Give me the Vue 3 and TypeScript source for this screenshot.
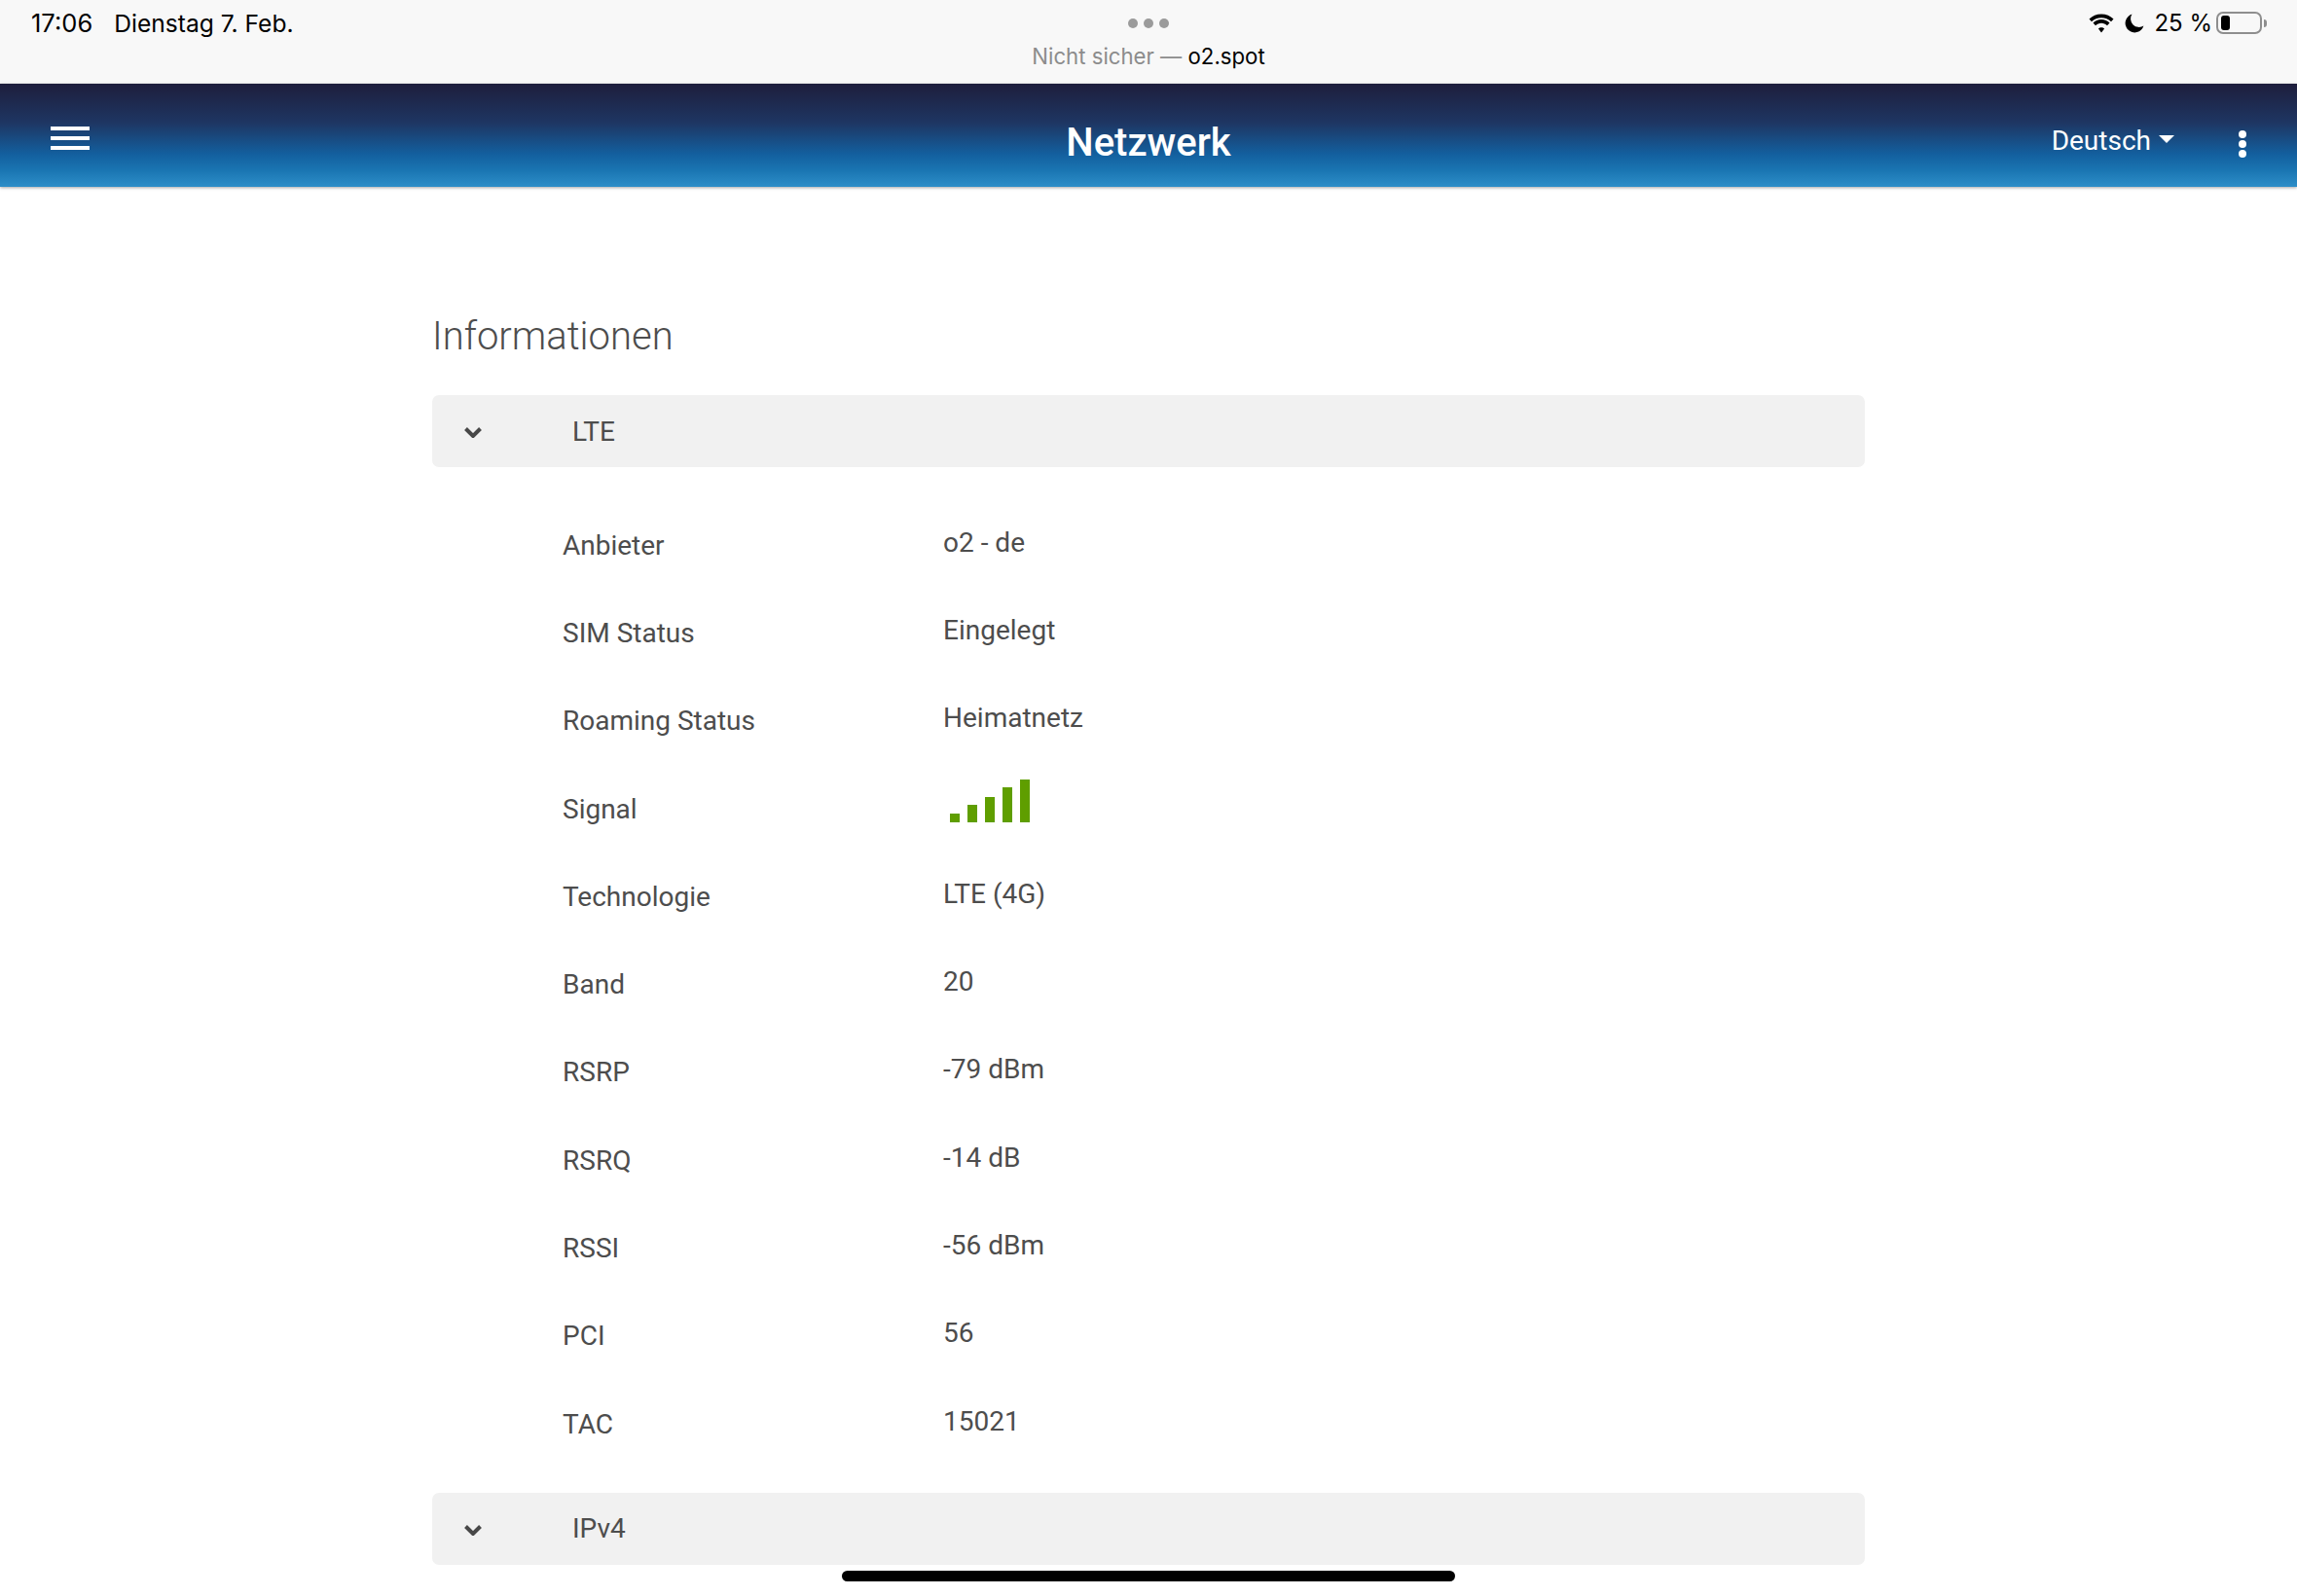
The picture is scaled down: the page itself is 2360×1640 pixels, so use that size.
<script setup lang="ts">
interface Row { label: string; value?: string; signal?: boolean }
const rows: Row[] = [
  { label: 'Anbieter', value: 'o2 - de' },
  { label: 'SIM Status', value: 'Eingelegt' },
  { label: 'Roaming Status', value: 'Heimatnetz' },
  { label: 'Signal', signal: true },
  { label: 'Technologie', value: 'LTE (4G)' },
  { label: 'Band', value: '20' },
  { label: 'RSRP', value: '-79 dBm' },
  { label: 'RSRQ', value: '-14 dB' },
  { label: 'RSSI', value: '-56 dBm' },
  { label: 'PCI', value: '56' },
  { label: 'TAC', value: '15021' },
]
const bars = [9, 18, 26, 36, 44]
</script>

<template>
  <div class="page">
    <div class="status">
      <div class="st-left"><span class="time">17:06</span><span>Dienstag 7. Feb.</span></div>
      <div class="st-mid">
        <div class="dots"><i></i><i></i><i></i></div>
        <div class="url"><span class="grey">Nicht sicher — </span>o2.spot</div>
      </div>
      <div class="st-right">
        <svg class="wifi" width="28" height="20" viewBox="0 0 28 20">
          <path d="M14 4.2c3.9 0 7.4 1.5 10 4l2.5-2.7C23.300 2.300 18.900 .4 14 .4S4.700 2.300 1.500 5.500L4 8.200c2.600-2.500 6.100-4 10-4z" fill="#000"/>
          <path d="M14 9.800c2.300 0 4.400.9 6 2.400l2.500-2.700c-2.200-2.100-5.200-3.400-8.500-3.400s-6.300 1.300-8.500 3.400L8 12.200c1.600-1.500 3.700-2.400 6-2.400z" fill="#000"/>
          <path d="M14 14.200c-1.200 0-2.300.5-3.100 1.200L14 19.600l3.100-4.200c-.8-.7-1.900-1.200-3.100-1.200z" fill="#000"/>
        </svg>
        <svg class="moon" width="20" height="20" viewBox="0 0 20 20">
          <path d="M7.500.6A9.600 9.600 0 1 0 19.400 12.500 8.600 8.600 0 0 1 7.500.6z" fill="#000"/>
        </svg>
        <span class="pct">25 %</span>
        <div class="battery"><div class="level"></div></div>
        <div class="nub"></div>
      </div>
    </div>

    <header class="bar">
      <div class="burger"><i></i><i></i><i></i></div>
      <h1 class="title">Netzwerk</h1>
      <div class="lang">Deutsch<span class="caret"></span></div>
      <div class="kebab"><i></i><i></i><i></i></div>
    </header>

    <main class="content">
      <h2 class="heading">Informationen</h2>
      <div class="panel">
        <svg class="chev" width="18" height="12" viewBox="0 0 18 12">
          <path d="M1.500 2.500l7.500 7.500 7.500-7.500" fill="none" stroke="#484848" stroke-width="4"/>
        </svg>
        <span>LTE</span>
      </div>
      <div class="rows">
        <div v-for="r in rows" :key="r.label" class="row">
          <div class="lbl">{{ r.label }}</div>
          <div v-if="r.signal" class="signal">
            <i v-for="(h, n) in bars" :key="n" :style="{ height: h + 'px' }"></i>
          </div>
          <div v-else class="val">{{ r.value }}</div>
        </div>
      </div>
      <div class="panel">
        <svg class="chev" width="18" height="12" viewBox="0 0 18 12">
          <path d="M1.500 2.500l7.500 7.500 7.500-7.500" fill="none" stroke="#484848" stroke-width="4"/>
        </svg>
        <span>IPv4</span>
      </div>
    </main>

    <div class="home"></div>
  </div>
</template>

<style>
html, body { margin: 0; background: #fff; }
</style>

<style scoped>
.page {
  position: relative;
  width: 2360px;
  height: 1640px;
  overflow: hidden;
  background: #fff;
  font-family: Roboto, "Liberation Sans", sans-serif;
  color: #4d4d4d;
}
.status {
  height: 86px;
  background: #f8f8f8;
  display: grid;
  grid-template-columns: 1fr auto 1fr;
  font-family: Inter, "Liberation Sans", sans-serif;
  color: #000;
  font-size: 24px;
}
.st-left {
  display: flex;
  gap: 22px;
  padding: 9px 0 0 32px;
  line-height: 30px;
  align-items: flex-start;
  font-size: 24.600px;
}
.time { font-size: 25.500px; }
.st-mid {
  display: flex;
  flex-direction: column;
  align-items: center;
  padding-top: 19px;
}
.dots { display: flex; gap: 6px; }
.dots i { width: 10px; height: 10px; border-radius: 50%; background: #9b9b9b; }
.url { margin-top: 14px; line-height: 30px; font-size: 22.200px; }
.grey { color: #8c8c8c; }
.st-right {
  display: flex;
  justify-content: flex-end;
  align-items: flex-start;
  padding: 9px 31px 0 0;
  line-height: 30px;
}
.wifi { margin: 5px 10px 0 0; }
.moon { margin: 5px 10px 0 0; }
.pct { margin-right: 4px; }
.battery {
  width: 47px;
  height: 23px;
  margin-top: 3px;
  box-sizing: border-box;
  border: 2px solid #8e8e8e;
  border-radius: 7px;
  padding: 2px 3px;
}
.level { width: 9px; height: 15px; background: #000; border-radius: 3px; }
.nub {
  width: 3px;
  height: 8px;
  margin: 11px 0 0 2px;
  background: #8e8e8e;
  border-radius: 0 3px 3px 0;
}
.bar {
  height: 106px;
  box-sizing: border-box;
  display: flex;
  align-items: center;
  position: relative;
  background: linear-gradient(to bottom, #1e1e3c 0%, #1e3663 38%, #135f9e 68%, #1a75b2 84%, #2d8ec8 100%);
  box-shadow: 0 1px 3px rgba(0, 0, 0, .35);
  color: #fff;
  padding: 0 52px;
}
.burger { display: flex; flex-direction: column; gap: 6px; margin-top: 6px; }
.burger i { display: block; width: 40px; height: 4px; background: #fff; }
.title {
  position: absolute;
  left: 0;
  right: 0;
  top: 37px;
  margin: 0;
  text-align: center;
  font-size: 40px;
  line-height: 48px;
  font-weight: 500;
}
.lang {
  margin-left: auto;
  display: flex;
  align-items: center;
  font-size: 28px;
  margin-top: 11px;
  margin-right: 66px;
}
.caret {
  width: 0;
  height: 0;
  margin: -4px 0 0 8px;
  border-left: 8px solid transparent;
  border-right: 8px solid transparent;
  border-top: 8px solid #fff;
}
.kebab {
  display: flex;
  flex-direction: column;
  gap: 2px;
  margin-right: 0;
  margin-top: 18px;
}
.kebab i { width: 8px; height: 8px; border-radius: 50%; background: #fff; }
.content {
  width: 1472px;
  margin: 0 auto;
  padding-top: 123px;
}
.heading {
  margin: 0 0 29px;
  font-size: 40px;
  line-height: 62px;
  font-weight: 300;
  color: #4d4d4d;
}
.panel {
  height: 74px;
  display: flex;
  align-items: center;
  background: #f1f1f1;
  border-radius: 7px;
  font-size: 28px;
  padding-left: 33px;
}
.chev { margin-right: 93px; margin-top: 2px; }
.rows { padding: 33px 0 27.700px 134px; }
.row {
  height: 90.300px;
  display: flex;
  align-items: center;
  font-size: 28px;
}
.lbl { width: 391px; padding-top: 4px; }
.val { padding-bottom: 2px; }
.signal {
  display: flex;
  align-items: flex-end;
  gap: 8px;
  margin: -13px 0 0 7px;
}
.signal i { width: 10px; background: #5f9e00; }
.home {
  position: absolute;
  left: 865px;
  top: 1614px;
  width: 630px;
  height: 11px;
  border-radius: 6px;
  background: #000;
}
</style>
